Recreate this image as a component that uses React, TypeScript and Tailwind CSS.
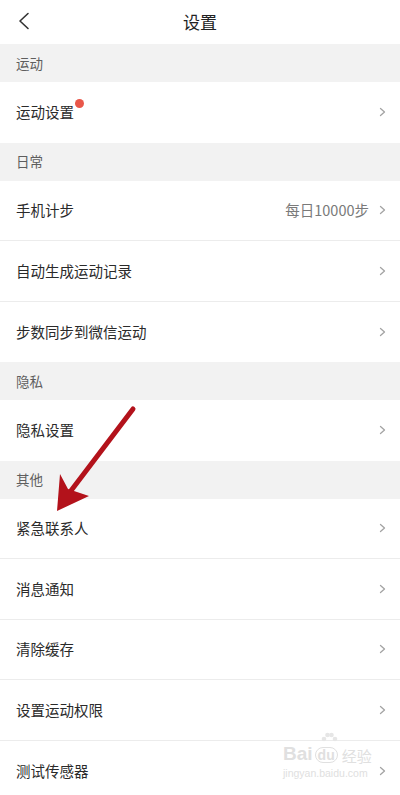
import React from 'react';

const font = { fontFamily: '"Noto Sans CJK SC", "Noto Sans", sans-serif' };

type Row = { label: string; value?: string; dot?: boolean };
type Section = { title: string; rows: Row[] };

const sections: Section[] = [
  { title: '运动', rows: [{ label: '运动设置', dot: true }] },
  {
    title: '日常',
    rows: [
      { label: '手机计步', value: '每日10000步' },
      { label: '自动生成运动记录' },
      { label: '步数同步到微信运动' },
    ],
  },
  { title: '隐私', rows: [{ label: '隐私设置' }] },
  {
    title: '其他',
    rows: [
      { label: '紧急联系人' },
      { label: '消息通知' },
      { label: '清除缓存' },
      { label: '设置运动权限' },
      { label: '测试传感器' },
    ],
  },
];

const Chevron = () => (
  <svg width="7" height="10" viewBox="0 0 7 10" fill="none">
    <path d="M1.5 1.5 L5.5 5 L1.5 8.5" stroke="#a3a3a3" strokeWidth="1.3" strokeLinecap="round" strokeLinejoin="round" />
  </svg>
);

const SettingRow = ({ row, last }: { row: Row; last: boolean }) => (
  <div className={`h-[60.5px] flex items-center pl-4 pr-[14px] bg-white ${last ? '' : 'border-b border-[#ececec]'}`}>
    <span className="relative text-[14.5px] text-[#2a2a2a]">
      {row.label}
      {row.dot && <span className="absolute -right-[10px] top-[-2px] w-[9px] h-[9px] rounded-full bg-[#e9574a]" />}
    </span>
    <div className="flex-1" />
    {row.value && <span className="text-[14.5px] text-[#7a7a7a] mr-[10px]">{row.value}</span>}
    <Chevron />
  </div>
);

export default function App() {
  return (
    <div className="relative w-[400px] h-[795px] overflow-hidden bg-white" style={font}>
      <div className="h-[44px] flex items-center justify-center relative">
        <svg className="absolute left-[17px] top-[12px]" width="14" height="18" viewBox="0 0 14 18" fill="none">
          <path d="M11 1.5 L3 9 L11 16.5" stroke="#333" strokeWidth="1.6" strokeLinecap="round" strokeLinejoin="round" />
        </svg>
        <span className="text-[17px] text-[#222]">设置</span>
      </div>
      {sections.map((s) => (
        <div key={s.title}>
          <div className="h-[38px] bg-[#f2f2f2] flex items-center pl-4 text-[13.5px] text-[#5e5e5e]">{s.title}</div>
          {s.rows.map((r, i) => (
            <SettingRow key={r.label} row={r} last={i === s.rows.length - 1} />
          ))}
        </div>
      ))}

      <svg className="absolute left-0 top-0 pointer-events-none" width="400" height="795" viewBox="0 0 400 795">
        <path d="M133 409 L70 492" stroke="#b3121b" strokeWidth="5" strokeLinecap="round" />
        <path d="M57 511 L60 474 L68 489 L89 496 Z" fill="#b3121b" />
      </svg>

      <div className="absolute left-[283px] top-[744px] flex flex-col items-start pointer-events-none">
        <div className="relative flex items-end text-[#e0e0e0] leading-none">
          <span className="text-[19px] font-bold" style={{ fontFamily: '"Liberation Sans", sans-serif' }}>Bai</span>
          <span className="text-[14px] font-bold ml-[2px] px-[2px] rounded-full border border-[#e0e0e0]" style={{ fontFamily: '"Liberation Sans", sans-serif' }}>du</span>
          <span className="text-[15px] ml-[4px]">经验</span>
          <svg className="absolute left-[37px] -top-[12px]" width="18" height="12" viewBox="0 0 18 12" fill="#e6e6e6">
            <circle cx="4" cy="7" r="2.3" />
            <circle cx="7.5" cy="3" r="2.3" />
            <circle cx="11.5" cy="3" r="2.3" />
            <circle cx="15" cy="7" r="2.3" />
          </svg>
        </div>
        <span className="text-[10.5px] text-[#e0e0e0] mt-[5px] leading-none" style={{ fontFamily: '"Liberation Sans", sans-serif' }}>jingyan.baidu.com</span>
      </div>
    </div>
  );
}
